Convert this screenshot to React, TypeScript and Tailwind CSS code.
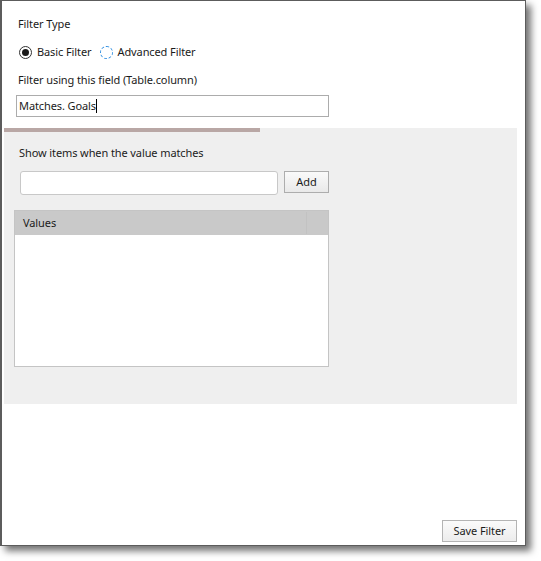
import React from "react";

export default function App() {
  const font = { fontFamily: '"Noto Sans", "Open Sans", sans-serif' };
  return (
    <div className="w-[541px] h-[561px] bg-white text-[11px] tracking-[-0.1px] text-[#1b1b1b]" style={font}>
      <div className="w-[526px] h-[546px] bg-white border border-[#5c5c5c] border-l-2 shadow-[5px_5px_7px_rgba(0,0,0,0.55)] flex flex-col">
        <div className="pl-[16px] mt-[15px] leading-[16px]">Filter Type</div>
        <div className="flex items-center mt-[12px] h-[16px] leading-[16px] pl-[17px]">
          <span className="w-[13px] h-[13px] rounded-full border border-[#333] flex items-center justify-center">
            <span className="w-[7px] h-[7px] rounded-full bg-[#1a1a1a]"></span>
          </span>
          <span className="ml-[5px]">Basic Filter</span>
          <span className="ml-[9px] w-[13px] h-[13px] rounded-full border border-dashed border-[#2b8ce0]"></span>
          <span className="ml-[4px]">Advanced Filter</span>
        </div>
        <div className="pl-[16px] mt-[12px] leading-[16px]">Filter using this field (Table.column)</div>
        <div className="ml-[14px] mt-[7px] w-[313px] h-[22px] border border-[#acacac] flex items-center pl-[2px] leading-[16px]">
          <span>Matches. Goals</span>
          <span className="w-px h-[14px] bg-black"></span>
        </div>
        <div className="ml-[2px] mt-[11px] w-[513px] bg-[#efefef] flex flex-col pb-[37px]">
          <div className="w-[256px] h-[4px] bg-[#b9a7a5]"></div>
          <div className="pl-[15px] mt-[13px] leading-[16px]">Show items when the value matches</div>
          <div className="flex items-start mt-[10px] ml-[16px]">
            <div className="w-[258px] h-[24px] bg-white border border-[#c8c8c8] rounded-[3px]"></div>
            <button className="ml-[6px] w-[45px] h-[22px] border border-[#adadad] bg-gradient-to-b from-[#fafafa] to-[#e9e9e9] leading-[16px] text-[11px]">Add</button>
          </div>
          <div className="ml-[10px] mt-[15px] w-[315px] h-[157px] border border-[#c4c4c4] bg-white flex flex-col">
            <div className="h-[24px] bg-[#c9c9c9] flex items-center">
              <span className="pl-[8px] flex-1">Values</span>
              <span className="w-px h-[22px] bg-[#c2c2c2] mr-[21px]"></span>
            </div>
          </div>
        </div>
        <div className="mt-auto mb-[3px] mr-[8px] flex justify-end">
          <button className="w-[75px] h-[22px] border border-[#b4b4b4] bg-gradient-to-b from-[#fbfbfb] to-[#ececec] text-[11px] leading-[16px]">Save Filter</button>
        </div>
      </div>
    </div>
  );
}
